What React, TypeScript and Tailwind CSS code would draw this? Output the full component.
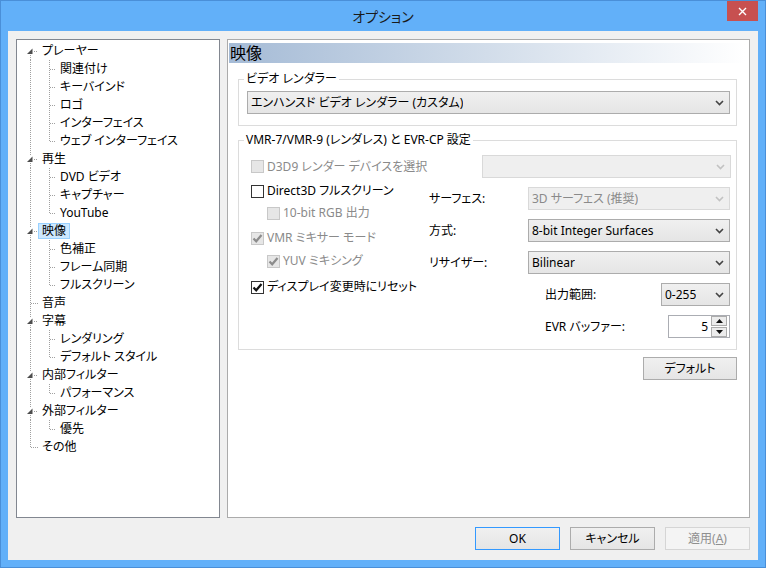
import React from "react";
import clsx from "clsx";

type TreeNode = { label: string; children?: string[]; selected?: boolean };

const tree: TreeNode[] = [
  { label: "プレーヤー", children: ["関連付け", "キーバインド", "ロゴ", "インターフェイス", "ウェブ インターフェイス"] },
  { label: "再生", children: ["DVD ビデオ", "キャプチャー", "YouTube"] },
  { label: "映像", selected: true, children: ["色補正", "フレーム同期", "フルスクリーン"] },
  { label: "音声" },
  { label: "字幕", children: ["レンダリング", "デフォルト スタイル"] },
  { label: "内部フィルター", children: ["パフォーマンス"] },
  { label: "外部フィルター", children: ["優先"] },
  { label: "その他" },
];

const dot = { stroke: "#a0a0a0", strokeDasharray: "1 1", shapeRendering: "crispEdges" as const };

function VLine({ x, y1, y2 }: { x: number; y1: number; y2: number }) {
  return <line x1={x} x2={x} y1={y1} y2={y2} {...dot} />;
}

function HLine({ y, x1, x2 }: { y: number; x1: number; x2: number }) {
  return <line x1={x1} x2={x2} y1={y} y2={y} {...dot} />;
}

function RootRow({ node, first, last }: { node: TreeNode; first: boolean; last: boolean }) {
  const open = !!node.children;
  return (
    <div className="flex h-[18px] items-center">
      <svg width="21" height="18" className="shrink-0">
        {open ? (
          <>
            {!first && <VLine x={13.5} y1={0} y2={5} />}
            <VLine x={13.5} y1={13} y2={18} />
            <polygon points="15.5,6.5 15.5,12 10,12" fill="#4d4d4d" />
            <HLine y={9.5} x1={17} x2={21} />
          </>
        ) : (
          <>
            <VLine x={13.5} y1={0} y2={last ? 10 : 18} />
            <HLine y={9.5} x1={14} x2={21} />
          </>
        )}
      </svg>
      <span
        className={clsx(
          "flex h-[16px] items-center border px-[3px] leading-[14px]",
          node.selected ? "border-[#99d1ff] bg-[#cce8ff]" : "border-transparent"
        )}
      >
        {node.label}
      </span>
    </div>
  );
}

function ChildRow({ label, last }: { label: string; last: boolean }) {
  return (
    <div className="flex h-[18px] items-center">
      <svg width="39" height="18" className="shrink-0">
        <VLine x={13.5} y1={0} y2={18} />
        <VLine x={32.5} y1={0} y2={last ? 10 : 18} />
        <HLine y={9.5} x1={33} x2={39} />
      </svg>
      <span className="flex h-[16px] items-center border border-transparent px-[3px] leading-[14px]">{label}</span>
    </div>
  );
}

function Chevron({ disabled }: { disabled?: boolean }) {
  return (
    <svg width="9" height="6" className="shrink-0">
      <path d="M1 1 L4.5 4.5 L8 1" fill="none" stroke={disabled ? "#c2c2c2" : "#444"} strokeWidth="1.6" />
    </svg>
  );
}

function Combo({ value, disabled, className }: { value?: string; disabled?: boolean; className?: string }) {
  return (
    <div
      className={clsx(
        "flex h-[23px] items-center justify-between border pl-[3px] pr-[5px]",
        disabled
          ? "border-[#d9d9d9] bg-[#efefef] text-[#8a8a8a]"
          : "border-[#acacac] bg-linear-to-b from-[#f0f0f0] to-[#e5e5e5] text-black",
        className
      )}
    >
      <span className="truncate">{value}</span>
      <Chevron disabled={disabled} />
    </div>
  );
}

function Check({
  label,
  checked,
  disabled,
  indent,
  className,
}: {
  label: string;
  checked?: boolean;
  disabled?: boolean;
  indent?: boolean;
  className?: string;
}) {
  return (
    <div className={clsx("flex h-[16px] items-center", indent && "pl-[16px]", className)}>
      <div
        className={clsx(
          "flex h-[13px] w-[13px] shrink-0 items-center justify-center border",
          disabled ? "border-[#c8c8c8] bg-[#e6e6e6]" : "border-[#333] bg-white"
        )}
      >
        {checked && (
          <svg width="11" height="11">
            <path d="M1.5 5.5 L4.2 8.3 L9.5 2" fill="none" stroke={disabled ? "#8c8c8c" : "#111"} strokeWidth="2.2" />
          </svg>
        )}
      </div>
      <span className={clsx("ml-[3px]", disabled ? "text-[#8a8a8a]" : "text-black")}>{label}</span>
    </div>
  );
}

function Button({
  children,
  primary,
  disabled,
  className,
}: {
  children: React.ReactNode;
  primary?: boolean;
  disabled?: boolean;
  className?: string;
}) {
  return (
    <div
      className={clsx(
        "flex h-[23px] w-[85px] items-center justify-center border",
        disabled
          ? "border-[#d5d5d5] bg-[#f4f4f4] text-[#8f8f8f]"
          : primary
            ? "border-[#3399ff] bg-linear-to-b from-[#f0f0f0] to-[#e5e5e5]"
            : "border-[#acacac] bg-linear-to-b from-[#f0f0f0] to-[#e5e5e5]",
        className
      )}
    >
      {children}
    </div>
  );
}

function Spin({ value }: { value: string }) {
  return (
    <div className="flex h-[23px] w-[62px] items-center border border-[#abadb3] bg-white pr-[2px]">
      <span className="flex-1 pr-[3px] text-right">{value}</span>
      <div className="flex flex-col gap-[1px]">
        <div className="flex h-[10px] w-[16px] items-center justify-center border border-[#acacac] bg-[#ececec]">
          <svg width="7" height="4">
            <polygon points="0,4 7,4 3.5,0" fill="#111" />
          </svg>
        </div>
        <div className="flex h-[10px] w-[16px] items-center justify-center border border-[#acacac] bg-[#ececec]">
          <svg width="7" height="4">
            <polygon points="0,0 7,0 3.5,4" fill="#111" />
          </svg>
        </div>
      </div>
    </div>
  );
}

export default function App() {
  return (
    <div className="flex h-[568px] w-[766px] flex-col border border-[#4a8fd8] bg-[#62b0f9] font-['Noto_Sans','Noto_Sans_CJK_JP',sans-serif] text-[12px] text-black [font-feature-settings:'palt']">
      {/* title bar */}
      <div className="grid h-[30px] shrink-0 grid-cols-[1fr_auto_1fr]">
        <div />
        <div className="flex items-center text-[14px] text-[#1a1a1a]">オプション</div>
        <div className="flex justify-end pr-[7px]">
          <div className="flex h-[20px] w-[31px] items-center justify-center bg-[#c75050]">
            <svg width="9" height="9">
              <path d="M1 1 L8 8 M8 1 L1 8" stroke="#fff" strokeWidth="1.4" />
            </svg>
          </div>
        </div>
      </div>

      {/* client */}
      <div className="mx-[7px] flex h-[529px] flex-col bg-[#f0f0f0] px-[8px] pt-[8px]">
        <div className="flex h-[479px] gap-[7px]">
          {/* tree */}
          <div className="h-full w-[204px] shrink-0 border border-[#828790] bg-white pt-[2px]">
            {tree.map((node, i) => (
              <React.Fragment key={node.label}>
                <RootRow node={node} first={i === 0} last={i === tree.length - 1} />
                {node.children?.map((c, j) => (
                  <ChildRow key={c} label={c} last={j === node.children!.length - 1} />
                ))}
              </React.Fragment>
            ))}
          </div>

          {/* page */}
          <div className="flex h-full w-[523px] flex-col border border-[#ababab] bg-white">
            <div className="ml-[1px] mr-[4px] mt-[3px] h-[20px] bg-linear-to-r from-[#a5bbd6] via-[#d2ddea] to-white pl-[1px] text-[16px] leading-[20px]">
              映像
            </div>

            <div className="ml-[10px] flex w-[499px] flex-col">
              <fieldset className="mt-[8px] border border-[#dcdcdc]">
                <legend className="ml-[5px] px-[2px] leading-[16px]">ビデオ レンダラー</legend>
                <div className="pb-[11px] pl-[8px] pr-[6px] pt-[4px]">
                  <Combo value="エンハンスド ビデオ レンダラー (カスタム)" />
                </div>
              </fieldset>

              <fieldset className="mt-[6px] border border-[#dcdcdc]">
                <legend className="ml-[5px] px-[2px] leading-[16px]">VMR-7/VMR-9 (レンダレス) と EVR-CP 設定</legend>
                <div className="pb-[11px] pl-[12px] pr-[5px] pt-[7px]">
                  <div className="flex items-center justify-between">
                    <Check label="D3D9 レンダー デバイスを選択" disabled />
                    <Combo disabled className="w-[249px]" />
                  </div>
                  <div className="flex">
                    <div className="flex w-[178px] flex-col">
                      <Check label="Direct3D フルスクリーン" className="mt-[5px]" />
                      <Check label="10-bit RGB 出力" disabled indent className="mt-[6px]" />
                      <Check label="VMR ミキサー モード" checked disabled className="mt-[9px]" />
                      <Check label="YUV ミキシング" checked disabled indent className="mt-[7px]" />
                      <Check label="ディスプレイ変更時にリセット" checked className="mt-[10px]" />
                    </div>
                    <div className="mt-[9px] flex w-[301px] flex-col gap-[9px]">
                      <div className="flex items-center">
                        <span className="w-[99px]">サーフェス:</span>
                        <Combo value="3D サーフェス (推奨)" disabled className="w-[202px]" />
                      </div>
                      <div className="flex items-center">
                        <span className="w-[99px]">方式:</span>
                        <Combo value="8-bit Integer Surfaces" className="w-[202px]" />
                      </div>
                      <div className="flex items-center">
                        <span className="w-[99px]">リサイザー:</span>
                        <Combo value="Bilinear" className="w-[202px]" />
                      </div>
                      <div className="flex items-center justify-between pl-[116px]">
                        <span>出力範囲:</span>
                        <Combo value="0-255" className="w-[69px]" />
                      </div>
                      <div className="flex items-center justify-between pl-[116px]">
                        <span>EVR バッファー:</span>
                        <Spin value="5" />
                      </div>
                    </div>
                  </div>
                </div>
              </fieldset>

              <Button className="mt-[7px] w-[94px] self-end">デフォルト</Button>
            </div>
          </div>
        </div>

        <div className="mt-[9px] flex justify-end gap-[10px]">
          <Button primary>OK</Button>
          <Button>キャンセル</Button>
          <Button disabled>
            適用(<span className="underline">A</span>)
          </Button>
        </div>
      </div>
    </div>
  );
}
